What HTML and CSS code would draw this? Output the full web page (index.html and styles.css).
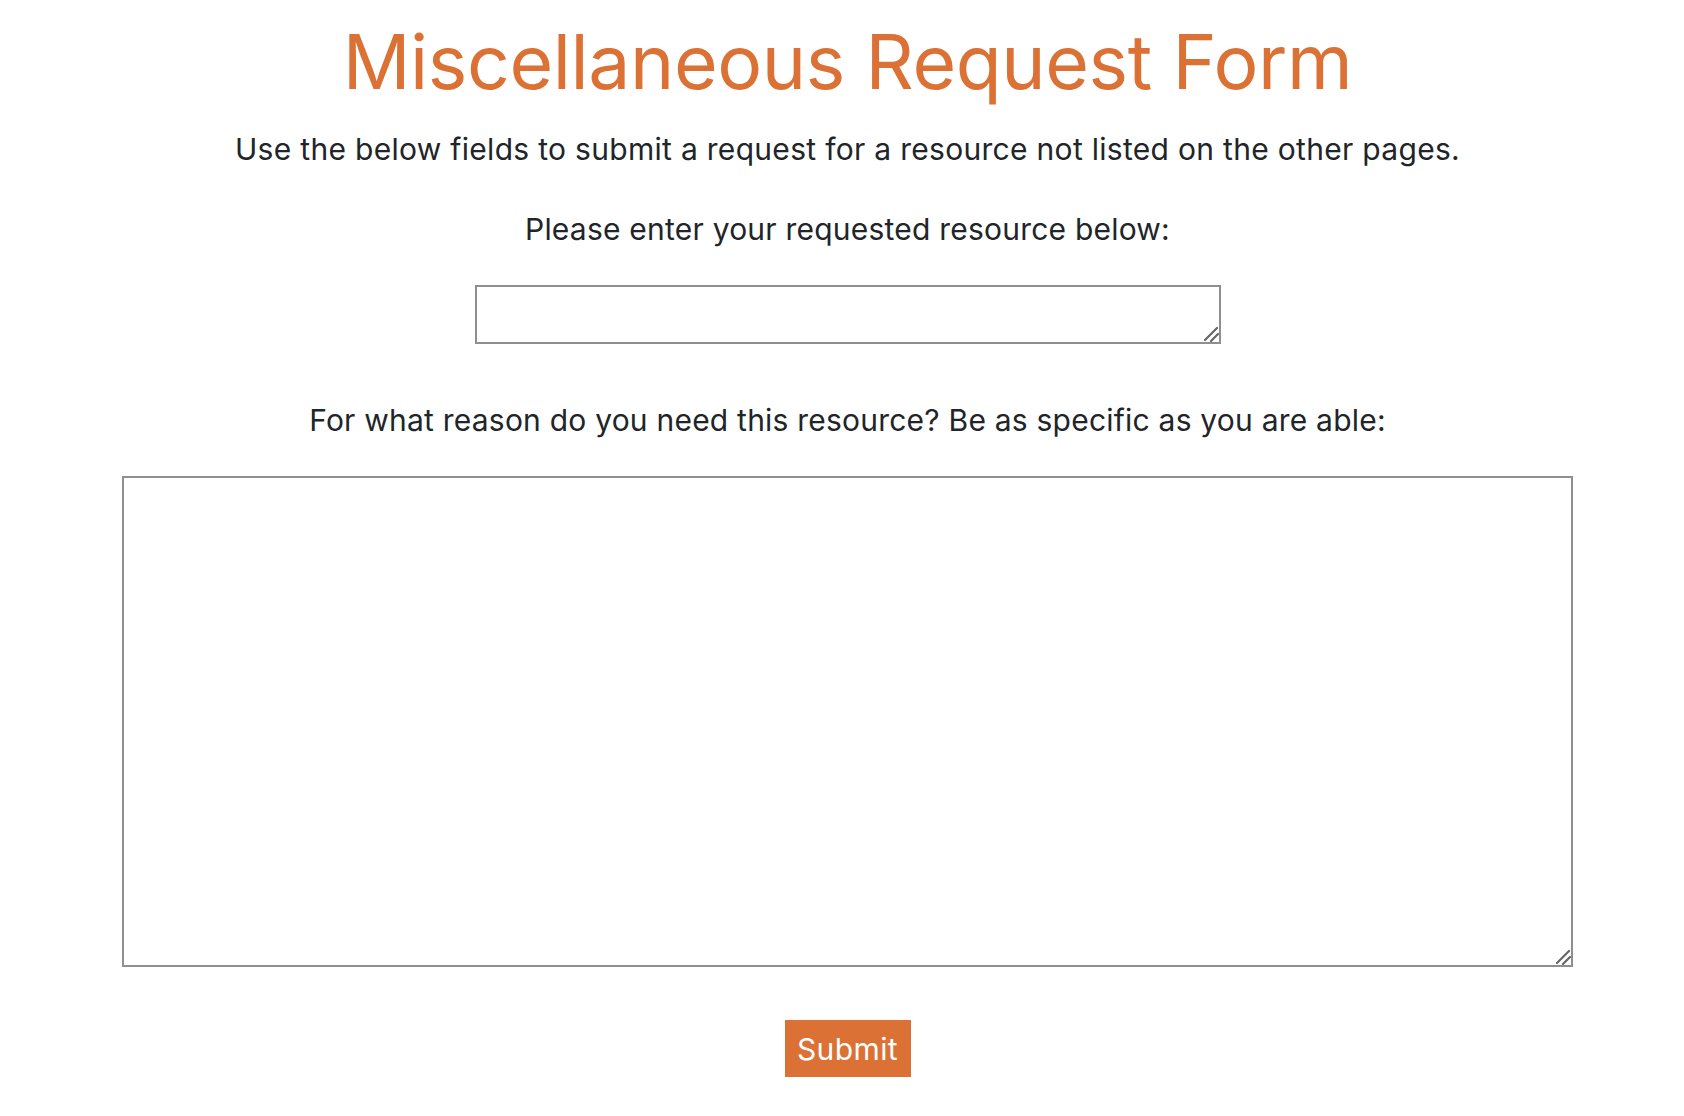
FILE: index.html
```html
<!DOCTYPE html>
<html lang="en">
<head>
<meta charset="utf-8">
<title>Miscellaneous Request Form</title>
<link rel="stylesheet" href="styles.css">
</head>
<body>
<main class="page">
  <h1 class="title">Miscellaneous Request Form</h1>
  <p class="intro">Use the below fields to submit a request for a resource not listed on the other pages.</p>
  <form class="form">
    <label class="label label-first" for="resource">Please enter your requested resource below:</label>
    <div class="field-wrap">
      <textarea id="resource" class="field field-small"></textarea>
      <svg class="grip" width="16" height="16" viewBox="0 0 16 16" aria-hidden="true"><path d="M2 14 L14 2 M8 15 L15 8" stroke="#666666" stroke-width="2.2" stroke-linecap="round" fill="none"/></svg>
    </div>
    <label class="label label-second" for="reason">For what reason do you need this resource? Be as specific as you are able:</label>
    <div class="field-wrap">
      <textarea id="reason" class="field field-large"></textarea>
      <svg class="grip" width="16" height="16" viewBox="0 0 16 16" aria-hidden="true"><path d="M2 14 L14 2 M8 15 L15 8" stroke="#666666" stroke-width="2.2" stroke-linecap="round" fill="none"/></svg>
    </div>
    <button type="button" class="submit">Submit</button>
  </form>
</main>
</body>
</html>
```
FILE: styles.css
```css
html, body {
  margin: 0;
  padding: 0;
  background: #ffffff;
}
body {
  font-family: Inter, "Noto Sans", "Liberation Sans", sans-serif;
  color: #212529;
}
.page {
  display: flex;
  flex-direction: column;
  align-items: center;
  padding: 17px 0 0 11px;
}
.title {
  margin: 0;
  font-size: 75px;
  font-weight: 400;
  line-height: 1.2;
  color: #db7134;
  letter-spacing: -0.4px;
}
.intro {
  margin: 24px 0 0;
  font-size: 30px;
  line-height: 1.2;
  letter-spacing: 0.3px;
}
.form {
  display: flex;
  flex-direction: column;
  align-items: center;
  width: 100%;
}
.label {
  display: block;
  font-size: 30px;
  line-height: 1.2;
  letter-spacing: 0.22px;
}
.label-first {
  margin-top: 44px;
}
.label-second {
  margin-top: 58px;
}
.field-wrap {
  position: relative;
  margin-top: 38px;
}
.field {
  display: block;
  box-sizing: border-box;
  border: 2px solid #8f8f8f;
  background: #fff;
  resize: none;
  font: inherit;
  margin: 0;
}
.grip {
  position: absolute;
  right: 2px;
  bottom: 2px;
  pointer-events: none;
}
.field-small {
  width: 746px;
  height: 59px;
}
.field-large {
  width: 1451px;
  height: 491px;
}
.submit {
  margin-top: 53px;
  width: 126px;
  height: 57px;
  border: 0;
  background: #db7134;
  color: #fff;
  font-family: inherit;
  font-size: 30px;
  letter-spacing: 0.4px;
  padding: 0;
}
```
